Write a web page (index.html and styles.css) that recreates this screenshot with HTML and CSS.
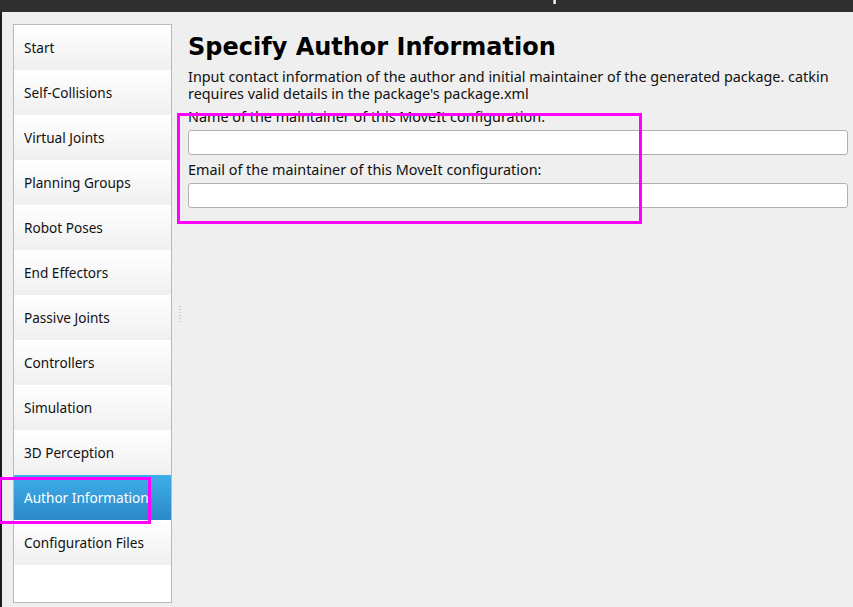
FILE: index.html
```html
<!DOCTYPE html>
<html>
<head>
<meta charset="utf-8">
<link rel="stylesheet" href="styles.css">
</head>
<body>
<div class="titlebar"><span class="tb-mark"></span></div>
<div class="main">
  <div class="edge"></div>
  <div class="window">
    <nav class="sidebar">
      <div class="item">Start</div>
      <div class="item">Self-Collisions</div>
      <div class="item">Virtual Joints</div>
      <div class="item">Planning Groups</div>
      <div class="item">Robot Poses</div>
      <div class="item">End Effectors</div>
      <div class="item">Passive Joints</div>
      <div class="item">Controllers</div>
      <div class="item">Simulation</div>
      <div class="item">3D Perception</div>
      <div class="item active">Author Information</div>
      <div class="item">Configuration Files</div>
    </nav>
    <div class="splitter"><span class="dots"></span></div>
    <section class="content">
      <h1 class="title">Specify Author Information</h1>
      <p class="desc">Input contact information of the author and initial maintainer of the generated package. catkin requires valid details in the package's package.xml</p>
      <label class="label">Name of the maintainer of this MoveIt configuration:</label>
      <div class="input"></div>
      <label class="label">Email of the maintainer of this MoveIt configuration:</label>
      <div class="input"></div>
    </section>
  </div>
</div>
<div class="mark mark-form"></div>
<div class="mark mark-nav"></div>
</body>
</html>
```

FILE: styles.css
```css
html, body {
  margin: 0;
  padding: 0;
  width: 853px;
  height: 607px;
  overflow: hidden;
  background: #efefef;
  font-family: "Noto Sans", "Open Sans", sans-serif;
  color: #111;
}
.titlebar {
  height: 12px;
  background: #2f2f2f;
  position: relative;
}
.tb-mark {
  position: absolute;
  left: 553px;
  top: 0;
  width: 3px;
  height: 4px;
  background: linear-gradient(90deg, #4a7fbf, #fff, #e0b050);
}
.main {
  display: flex;
  height: 595px;
}
.edge {
  width: 2px;
  background: #1d1d24;
}
.window {
  flex: 1;
  display: flex;
  padding: 12px 5px 4px 11px;
  background: #efefef;
}
.sidebar {
  width: 157px;
  border: 1px solid #b9b9b9;
  background: #fff;
  display: flex;
  flex-direction: column;
}
.item {
  height: 45px;
  display: flex;
  align-items: center;
  padding-left: 10px;
  font-size: 13.6px;
  color: #111;
  background: linear-gradient(#ffffff, #f0f0f0);
}
.item.active {
  background: linear-gradient(#3daee9, #2c89c8);
  color: #fff;
}
.splitter {
  width: 16px;
  display: flex;
  align-items: center;
  justify-content: center;
}
.dots {
  width: 2px;
  height: 16px;
  background: repeating-linear-gradient(#c8c8c8 0 1px, transparent 1px 3px);
}
.content {
  flex: 1;
  padding-top: 8px;
}
.title {
  margin: 0;
  font-family: "DejaVu Sans", sans-serif;
  font-weight: bold;
  font-size: 24px;
  line-height: 31px;
  color: #000;
}
.desc {
  margin: 5px 0 0;
  font-size: 14.4px;
  line-height: 17px;
  color: #111;
}
.label {
  display: block;
  font-size: 14.4px;
  line-height: 17px;
  margin-top: 6px;
  margin-bottom: 5px;
  color: #111;
}
.input {
  height: 23px;
  background: #fff;
  border: 1px solid #b0b0b0;
  border-radius: 3px;
}
.mark {
  position: absolute;
  border: 3px solid #ff00ff;
}
.mark-form {
  left: 177px;
  top: 113px;
  width: 459px;
  height: 105px;
}
.mark-nav {
  left: -2px;
  top: 477px;
  width: 147px;
  height: 41px;
}
```
